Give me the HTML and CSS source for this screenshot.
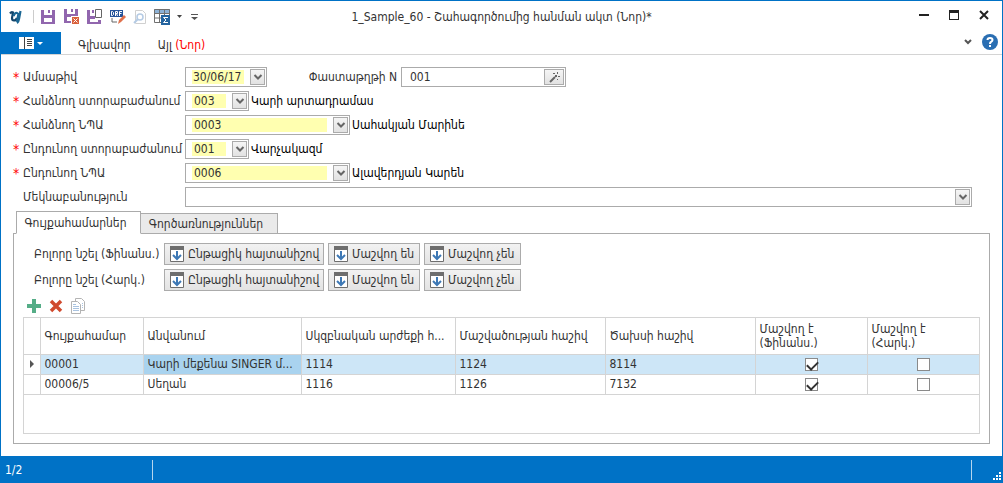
FILE: index.html
```html
<!DOCTYPE html>
<html lang="hy">
<head>
<meta charset="utf-8">
<title>1_Sample_60</title>
<link rel="stylesheet" href="styles.css">
</head>
<body>
<svg class="defs" aria-hidden="true">
  <symbol id="chev" viewBox="0 0 14 14"><path d="M3.500 5l3.500 3.500L10.500 5" fill="none" stroke="#666" stroke-width="2"/></symbol>
  <symbol id="down" viewBox="0 0 14 16"><path fill="#fff" stroke="#6e6e6e" d="M.5.5h13v15H.5z"/><path fill="#6e6e6e" d="M0 0h14v4H0z"/><path fill="none" stroke="#3d78b5" stroke-width="2" d="M7 5v8M3 9l4 4 4-4"/></symbol>
  <symbol id="floppy" viewBox="0 0 14 14"><path fill="#9166ae" d="M0 0h3v5h8V0h3v14H0z"/><path fill="#9166ae" d="M7 0h2v3H7z"/><path fill="#fff" d="M3 8h8v4H3z"/></symbol>
</svg>
<div class="window">
  <header class="titlebar">
    <div class="quick">
      <svg class="logo" width="14" height="16" viewBox="0 0 14 16"><path d="M1 4.500Q2.500 2.500 4 3.500L3 9q0 2.500 2 2.500T8 9" fill="none" stroke="#12456b" stroke-width="2.200"/><path d="M4.500 7Q6 3.500 8 4t1 3L8 13M11.500 2L10 10q-.5 3-2 4" fill="none" stroke="#1a6693" stroke-width="2.200"/></svg>
      <span class="bar"></span>
      <button class="tool" aria-label="Save"><svg width="16" height="14" viewBox="0 0 16 14"><use href="#floppy" width="14" height="14"/></svg></button>
      <button class="tool" aria-label="Save and close"><svg width="16" height="16" viewBox="0 0 16 16"><use href="#floppy" width="14" height="14"/><path fill="#fff" d="M7 7h9v9H7z"/><path fill="#d9603b" d="M8 8h7v7H8z"/><path stroke="#fff" d="M9.500 9.500l4 4m0-4l-4 4"/></svg></button>
      <button class="tool" aria-label="Save and new"><svg width="16" height="16" viewBox="0 0 16 16"><path fill="#9166ae" d="M0 1h3v6h5v4h6v4H0z"/><path fill="#9166ae" d="M5 1h2v3H5z"/><path fill="#fff" d="M3 10h8v3H3z"/><path fill="#fff" stroke="#666" d="M8.500.5h6v8h-6z"/></svg></button>
      <button class="tool" aria-label="Draft"><svg width="16" height="16" viewBox="0 0 16 16"><path fill="#24539a" d="M0 1h13v7H0z"/><path fill="none" stroke="#fff" d="M1.500 2.500h1l1 1v2l-1 1h-1zM5.500 7V2.500h2v2h-2m1 0l1 2.500M9.500 7V2.500H12M9.500 4.500h2"/><path fill="none" stroke="#666" d="M2 9v4h5"/><path fill="#e0714c" d="M8 15l1-4 5-5 2 2-5 5z"/></svg></button>
      <button class="tool" aria-label="Preview"><svg width="14" height="16" viewBox="0 0 14 16"><path fill="#fff" stroke="#d0d0d0" d="M2.500 1.500h7l3 3v10h-10z"/><circle cx="7" cy="8" r="3" fill="#fff" stroke="#b5cbe4" stroke-width="1.500"/><path stroke="#b5cbe4" stroke-width="2" d="M5 10l-4 4"/></svg></button>
      <button class="tool" aria-label="Totals"><svg width="16" height="16" viewBox="0 0 16 16"><path fill="#8db2d6" d="M0 0h16v5H0z"/><path fill="none" stroke="#707070" d="M.5.5h15v13H.5zM.5 4.500h15M.5 9h9M5.500 0v14M10.500 0v8"/><path fill="#24649f" d="M7 6h9v10H7z"/><path fill="none" stroke="#fff" d="M14 8.500H9.500l2.500 2.500-2.500 2.500H14"/></svg></button>
      <svg width="5" height="3"><path fill="#444" d="M0 0h5L2.500 3z"/></svg>
      <svg class="more" width="7" height="6"><path fill="#555" d="M0 0h7v1H0zM0 3h7L3.500 6z"/></svg>
    </div>
    <h1 class="title">1_Sample_60 - Շահագործումից հանման ակտ (Նոր)*</h1>
    <div class="controls">
      <button class="ctl" aria-label="Minimize"><svg width="10" height="10"><path fill="#222" d="M0 4h10v2H0z"/></svg></button>
      <button class="ctl" aria-label="Maximize"><svg width="10" height="10"><path fill="#222" d="M0 0h10v10H0zM1 3v6h8V3z" fill-rule="evenodd"/></svg></button>
      <button class="ctl" aria-label="Close"><svg width="10" height="10"><path stroke="#222" stroke-width="2" d="M1 1l8 8m0-8L1 9"/></svg></button>
    </div>
  </header>
  <nav class="ribbon">
    <button class="app" aria-label="Menu"><svg width="25" height="12" viewBox="0 0 25 12"><path fill="#fff" d="M0 0h15v12H0z"/><path fill="#444" d="M5 0h1v12H5zM8 2h5v1H8zM8 4h5v1H8zM8 6h5v1H8zM8 8h5v1H8z"/><path fill="#fff" d="M18 5h6l-3 3z"/></svg></button>
    <button class="rtab">Գլխավոր</button>
    <button class="rtab">Այլ <span class="red">(Նոր)</span></button>
    <div class="help">
      <button class="ctl" aria-label="Collapse"><svg width="8" height="6"><path fill="none" stroke="#555" stroke-width="2" d="M1 1l3 3 3-3"/></svg></button>
      <button class="ctl" aria-label="Help"><svg width="16" height="16"><circle cx="8" cy="8" r="8" fill="#2a6eb2"/><path fill="none" stroke="#fff" stroke-width="2" d="M5.500 6Q5.500 4 8 4t2.500 2Q10.500 7 9 8q-1 .5-1 2M8 11v2"/></svg></button>
    </div>
  </nav>
  <main class="content">
    <form class="form">
      <div class="row">
        <label class="label req" for="date">Ամսաթիվ</label>
        <span class="combo w-date"><input class="in yellow" id="date" value="30/06/17"><button type="button" class="drop" aria-label="Open"><svg width="14" height="14"><use href="#chev"/></svg></button></span>
        <label class="doc" for="doc">Փաստաթղթի N</label>
        <span class="combo w-long"><input class="in" id="doc" value="001"><button type="button" class="drop wide" aria-label="Generate"><svg width="14" height="14"><path stroke="#666" stroke-width="2" d="M3 12l5-5"/><path fill="#666" d="M6 3h2v1H6zM10 2h1v2h-1zM8 5h2v2H8zM11 6h2v1h-2zM10 9h1v1h-1z"/></svg></button></span>
      </div>
      <div class="row">
        <label class="label req" for="d1">Հանձնող ստորաբաժանում</label>
        <span class="combo w-short"><input class="in yellow" id="d1" value="003"><button type="button" class="drop" aria-label="Open"><svg width="14" height="14"><use href="#chev"/></svg></button></span>
        <span class="name">Կարի արտադրամաս</span>
      </div>
      <div class="row">
        <label class="label req" for="p1">Հանձնող ՆՊԱ</label>
        <span class="combo w-long"><input class="in yellow" id="p1" value="0003"><button type="button" class="drop" aria-label="Open"><svg width="14" height="14"><use href="#chev"/></svg></button></span>
        <span class="name">Սահակյան Մարինե</span>
      </div>
      <div class="row">
        <label class="label req" for="d2">Ընդունող ստորաբաժանում</label>
        <span class="combo w-short"><input class="in yellow" id="d2" value="001"><button type="button" class="drop" aria-label="Open"><svg width="14" height="14"><use href="#chev"/></svg></button></span>
        <span class="name">Վարչակազմ</span>
      </div>
      <div class="row">
        <label class="label req" for="p2">Ընդունող ՆՊԱ</label>
        <span class="combo w-long"><input class="in yellow" id="p2" value="0006"><button type="button" class="drop" aria-label="Open"><svg width="14" height="14"><use href="#chev"/></svg></button></span>
        <span class="name">Ալավերդյան Կարեն</span>
      </div>
      <div class="row">
        <label class="label" for="note">Մեկնաբանություն</label>
        <span class="combo fill"><input class="in" id="note"><button type="button" class="drop" aria-label="Open"><svg width="14" height="14"><use href="#chev"/></svg></button></span>
      </div>
    </form>
    <div class="tabs">
      <button class="tab active">Գույքահամարներ</button>
      <button class="tab second">Գործառնություններ</button>
    </div>
    <section class="panel">
      <div class="marks">
        <span class="mark-label">Բոլորը նշել (Ֆինանս.)</span>
        <button class="btn b1"><svg width="14" height="16"><use href="#down"/></svg>Ընթացիկ հայտանիշով</button>
        <button class="btn b2"><svg width="14" height="16"><use href="#down"/></svg>Մաշվող են</button>
        <button class="btn b3"><svg width="14" height="16"><use href="#down"/></svg>Մաշվող չեն</button>
      </div>
      <div class="marks">
        <span class="mark-label">Բոլորը նշել (Հարկ.)</span>
        <button class="btn b1"><svg width="14" height="16"><use href="#down"/></svg>Ընթացիկ հայտանիշով</button>
        <button class="btn b2"><svg width="14" height="16"><use href="#down"/></svg>Մաշվող են</button>
        <button class="btn b3"><svg width="14" height="16"><use href="#down"/></svg>Մաշվող չեն</button>
      </div>
      <div class="actions">
        <button class="tool" aria-label="Add"><svg width="14" height="14"><path fill="#55ad87" d="M5 0h4v5h5v4H9v5H5V9H0V5h5z"/></svg></button>
        <button class="tool" aria-label="Delete"><svg width="14" height="14"><path stroke="#d04a2e" stroke-width="3.500" d="M2 2l10 10m0-10L2 12"/></svg></button>
        <button class="tool" aria-label="Copy"><svg width="14" height="16"><path fill="#fff" stroke="#b4b4b4" d="M4.500.5h6l3 3v9h-9z"/><path fill="#fff" stroke="#b4b4b4" d="M.5 3.500h6l3 3v9h-9z"/><path stroke="#a9c3e0" d="M2 6.500h3M2 8.500h6M2 10.500h6M2 12.500h6M11 5.500h1M11 7.500h1M11 9.500h1"/></svg></button>
      </div>
      <div class="grid">
        <table class="table">
          <colgroup><col class="c0"><col class="c1"><col class="c2"><col class="c3"><col class="c4"><col class="c4"><col class="c5"><col class="c6"></colgroup>
          <thead>
            <tr><th></th><th>Գույքահամար</th><th>Անվանում</th><th>Սկզբնական արժեքի հ...</th><th>Մաշվածության հաշիվ</th><th>Ծախսի հաշիվ</th><th>Մաշվող է<br>(Ֆինանս.)</th><th>Մաշվող է<br>(Հարկ.)</th></tr>
          </thead>
          <tbody>
            <tr class="sel"><td class="mark"><svg width="4" height="8"><path fill="#555" d="M0 0l4 4-4 4z"/></svg></td><td>00001</td><td class="focus">Կարի մեքենա SINGER մ...</td><td>1114</td><td>1124</td><td>8114</td><td class="chk"><input type="checkbox" class="box" aria-label="Ֆինանս. 00001" checked></td><td class="chk"><input type="checkbox" class="box" aria-label="Հարկ. 00001"></td></tr>
            <tr><td></td><td>00006/5</td><td>Սեղան</td><td>1116</td><td>1126</td><td>7132</td><td class="chk"><input type="checkbox" class="box" aria-label="Ֆինանս. 00006/5" checked></td><td class="chk"><input type="checkbox" class="box" aria-label="Հարկ. 00006/5"></td></tr>
          </tbody>
        </table>
      </div>
    </section>
  </main>
  <footer class="status">
    <span class="pos">1/2</span>
    <span class="rest"></span>
    <svg class="grip" width="8" height="8"><path fill="#fff" d="M6 0h2v2H6zM3 3h2v2H3zM6 3h2v2H6zM0 6h2v2H0zM3 6h2v2H3zM6 6h2v2H6z"/></svg>
  </footer>
</div>
</body>
</html>
```
FILE: styles.css
```css
* { box-sizing: border-box; }
body, button, input {
  margin: 0;
  color: #333;
  font-family: "DejaVu Sans Condensed", "DejaVu Sans", sans-serif;
  font-size: 12px;
}
button { padding: 0; border: 0; background: none; white-space: nowrap; }
svg { display: block; flex: none; }
.defs { position: absolute; width: 0; height: 0; }
.window {
  display: flex;
  flex-direction: column;
  min-height: 100vh;
  border: 1px solid #0072c6;
  border-bottom: 0;
  background: #fff;
}
.titlebar { display: grid; grid-template-columns: 1fr auto 1fr; align-items: center; height: 31px; }
.quick { display: flex; align-items: center; gap: 7px; padding-left: 8px; }
.logo { margin-right: 3px; }
.bar { width: 1px; height: 13px; background: #ccc; }
.tool { display: block; }
.more { margin-left: 2px; }
.title { margin: 0; font-size: 12px; font-weight: normal; }
.controls { display: flex; justify-content: flex-end; gap: 20px; padding: 0 13px 4px 0; }
.ribbon { display: flex; height: 23px; border-bottom: 1px solid #d4d4d4; }
.app { display: flex; align-items: center; justify-content: center; width: 60px; background: #0072c6; }
.rtab { margin-left: 17px; padding: 3px 10px 0 0; }
.red { color: #f00; }
.help { display: flex; gap: 10px; align-items: center; margin-left: auto; padding: 0 4px 2px 0; }
.content { flex: 1; display: flex; flex-direction: column; padding: 12px 12px; }
.form { display: flex; flex-direction: column; gap: 4px; padding-right: 18px; }
.row { display: flex; align-items: center; height: 20px; }
.label { position: relative; width: 172px; padding-left: 10px; white-space: nowrap; }
.req::before { content: "*"; position: absolute; left: 0; color: #f00; font-size: 14px; line-height: 14px; }
.combo { display: flex; align-items: center; height: 20px; padding: 0 1px 0 6px; border: 1px solid #ababab; background: #fff; }
.in { flex: 1; min-width: 0; height: 14px; margin-right: 6px; padding: 0 2px; border: 0; outline: 0; background: transparent; }
.yellow { background: #ffffb0; }
.w-date { width: 82px; }
.w-date .in { padding: 0 1px; }
.w-short { width: 64px; }
.w-long { width: 165px; }
.fill { flex: 1; }
.drop { display: flex; align-items: center; justify-content: center; width: 15px; height: 16px; border: 1px solid #ababab; background: linear-gradient(#f5f5f5, #e2e2e2); }
.wide { width: 20px; }
.doc { width: 134px; padding-right: 4px; text-align: right; }
.name { padding-left: 2px; color: #000; }
.tabs { position: relative; display: flex; align-items: flex-end; height: 23px; margin: 4px 0 -1px 3px; }
.tab { height: 23px; border: 1px solid #ababab; }
.active { width: 125px; padding-right: 6px; border-bottom-color: #fff; background: #fff; }
.second { width: 138px; height: 20px; margin: 0 0 1px -1px; padding-right: 6px; border-bottom: 0; background: #eaeaea; }
.panel { flex: 1; display: flex; flex-direction: column; padding: 9px 9px; border: 1px solid #ababab; }
.marks { display: flex; align-items: center; gap: 4px; margin-bottom: 4px; }
.mark-label { width: 137px; padding-left: 11px; white-space: nowrap; }
.btn { display: flex; align-items: center; gap: 4px; height: 22px; padding-left: 5px; border: 1px solid #ababab; background: linear-gradient(#f2f2f2, #e3e3e3); }
.b1 { width: 160px; }
.b2 { width: 92px; }
.b3 { width: 97px; }
.actions { display: flex; align-items: center; gap: 8px; height: 16px; margin: 3px 0 3px 4px; }
.grid { flex: 1; border: 1px solid #d4d4d4; }
.table { width: 100%; table-layout: fixed; border-collapse: collapse; }
th, td { height: 20px; padding: 0 4px; border: 1px solid #d4d4d4; text-align: left; font-weight: normal; line-height: 14px; white-space: nowrap; overflow: hidden; }
th { height: 36px; border-top: 0; }
th:first-child, td:first-child { border-left: 0; }
th:last-child, td:last-child { border-right: 0; }
.c0 { width: 16px; }
.c1 { width: 103px; }
.c2 { width: 158px; }
.c3 { width: 154px; }
.c4 { width: 150px; }
.c5 { width: 112px; }
.sel td { background: #cde6f7; }
.sel .focus { background: #a9d3ef; }
.sel .mark { padding: 0 6px; background: #fff; }
.box { appearance: none; display: block; width: 13px; height: 13px; margin: 1px auto 0; border: 1px solid #8a8a8a; background: #fff; }
.box:checked::before { content: ""; display: block; width: 9px; height: 5px; margin: 2px 0 0 1px; border: solid #333; border-width: 0 0 2px 2px; transform: rotate(-45deg); }
.status { display: flex; align-items: center; height: 27px; margin: 0 -1px; background: #0072c6; color: #fff; }
.pos { width: 153px; padding-left: 5px; line-height: 20px; border-right: 1px solid #b5d6ee; }
.rest { flex: 1; height: 20px; border-right: 1px solid #b5d6ee; }
.grip { align-self: flex-end; margin: 0 2px 3px 21px; }
```
